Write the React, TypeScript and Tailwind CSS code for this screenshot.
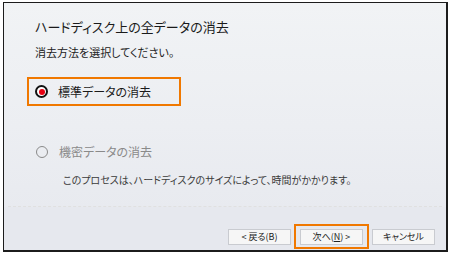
import React from "react";

const jp = "font-['Meiryo_UI','Noto_Sans_CJK_JP',sans-serif] [font-feature-settings:'palt']";

function Btn({ children }: { children: React.ReactNode }) {
  return (
    <div className="w-[63px] h-[16px] flex items-center justify-center bg-[#f6f6f6] border border-[#c9cbd0] text-[9px] text-[#222] leading-none">
      {children}
    </div>
  );
}

export default function App() {
  return (
    <div className={`w-[450px] h-[255px] bg-white pt-[2px] pl-[3px] ${jp}`}>
      <div className="w-[445px] h-[250px] border border-[#1c1c1c] border-r-2 border-b-2 flex flex-col bg-gradient-to-b from-[#f1f3f5] via-[#eceef2] to-[#e6e8ee]">
        <div className="pl-[31px] pt-[15px] flex flex-col">
          <div className="text-[13px] leading-[18px] text-[#1a1a1a]">ハードディスク上の全データの消去</div>
          <div className="mt-[8px] text-[11px] leading-[16px] text-[#222]">消去方法を選択してください。</div>
        </div>
        <div className="pl-[23px] mt-[17px]">
          <div className="w-[154px] h-[29px] border-2 border-[#f07800] flex items-center pl-[6px]">
            <div className="w-[13px] h-[13px] rounded-full border-2 border-[#111] bg-white flex items-center justify-center">
              <div className="w-[6px] h-[6px] rounded-full bg-[#e60012]" />
            </div>
            <span className="ml-[10px] text-[12px] text-[#1a1a1a] leading-none">標準データの消去</span>
          </div>
        </div>
        <div className="pl-[32px] mt-[40px] flex items-center">
          <div className="w-[12px] h-[12px] rounded-full border-[1.5px] border-[#8a8a8a]" />
          <span className="ml-[11px] text-[12px] text-[#8a8a8a] leading-none">機密データの消去</span>
        </div>
        <div className="pl-[59px] mt-[16px] text-[10px] leading-[12px] text-[#3a3a3a]">
          このプロセスは、ハードディスクのサイズによって、時間がかかります。
        </div>
        <div className="mt-[20px] mx-[4px] border-t border-dashed border-[#e0e0e0]" />
        <div className="flex-1 flex items-end pb-[1px] bg-[#e6e8ee]">
          <div className="ml-auto mr-[11px] flex items-center gap-[3px]">
            <Btn>&lt; 戻る(B)</Btn>
            <div className="border-2 border-[#f07800] p-[2px] px-[3px] w-[75px] h-[25px] flex items-center justify-center">
              <Btn>
                次へ(<span className="underline">N</span>) &gt;
              </Btn>
            </div>
            <Btn>キャンセル</Btn>
          </div>
        </div>
      </div>
    </div>
  );
}
